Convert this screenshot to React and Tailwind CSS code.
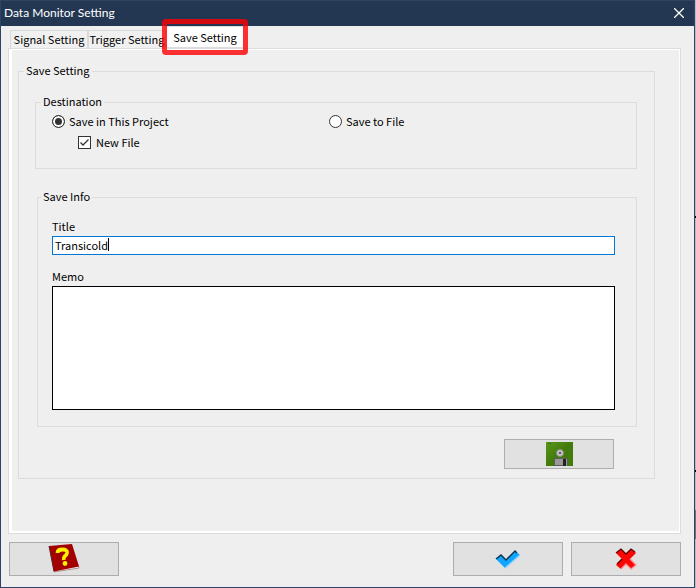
import { useState } from "react";

const tabs = ["Signal Setting", "Trigger Setting", "Save Setting"];

function GroupBox({ title, className, children }) {
  return (
    <fieldset className={`min-w-0 border border-[#dcdcdc] ${className}`}>
      <legend className="-ml-[11px] h-3 px-0.5 leading-[10px]">{title}</legend>
      {children}
    </fieldset>
  );
}

function RadioOption({ value, selected, onSelect, children }) {
  return (
    <label className="flex items-center gap-1 leading-4">
      <input
        type="radio"
        name="destination"
        value={value}
        checked={selected}
        onChange={() => onSelect(value)}
        className="size-[13px] appearance-none rounded-full border border-[#333] bg-white shadow-[inset_0_0_0_2px_white] checked:bg-[#333]"
      />
      {children}
    </label>
  );
}

function PushButton({ label, className, children }) {
  return (
    <button
      type="button"
      aria-label={label}
      className={`flex w-[110px] items-center justify-center border border-[#adadad] bg-[#e1e1e1] ${className}`}
    >
      {children}
    </button>
  );
}

function BookIcon() {
  return (
    <svg width="32" height="30" viewBox="0 0 32 30">
      <path d="M6 28 L31 24 L30 21" fill="#f4f4f4" stroke="#b09090" strokeWidth="1" />
      <path d="M1 2 L24 0 L31 22.500 L6 27.500Z" fill="#a30000" />
      <path d="M1 2 L6 27.500" stroke="#5c2020" strokeWidth="1" />
      <path d="M9.500 9 Q9.500 5.500 14.500 5.500 Q19.500 5.500 19 9 Q18.500 11.500 16.500 12.500 Q15.500 13.500 15.800 16" fill="none" stroke="#fff000" strokeWidth="3.800" />
      <circle cx="17" cy="19.500" r="2.400" fill="#fff000" />
    </svg>
  );
}

function CheckIcon() {
  return (
    <svg width="26" height="20" viewBox="0 0 26 20">
      <path d="M1 10 L6 6 L11 11 L20 2 L25 6 L10 19Z" fill="#10a5ff" />
      <path d="M1 10 L6 6 L11 11 L20 2 L22 4" fill="none" stroke="#0b3550" strokeWidth="1.500" />
      <path d="M25 6 L10 19" stroke="#8fd4ff" strokeWidth="1.500" />
    </svg>
  );
}

function CrossIcon() {
  return (
    <svg width="22" height="22" viewBox="0 0 22 22">
      <path d="M6 1 L11 6 L16 1 L21 5 L15 11 L21 17 L16 21 L11 16 L6 21 L1 17 L7 11 L1 5Z" fill="#fb0505" />
      <path d="M1 5 L6 1 L11 6 L16 1 L20 4 M7 11 L2 16" fill="none" stroke="#5a0000" strokeWidth="1.300" />
      <path d="M15 11 L21 17 L16 21 L11 16 L6 21" fill="none" stroke="#ff8f8f" strokeWidth="1.300" />
    </svg>
  );
}

function DiskIcon() {
  return (
    <svg width="27" height="24" viewBox="0 0 27 24">
      <defs>
        <linearGradient id="disk" x1="0" y1="0" x2="1" y2="1">
          <stop offset="0" stopColor="#59981a" />
          <stop offset="0.500" stopColor="#437a0c" />
          <stop offset="1" stopColor="#437a0c" />
        </linearGradient>
      </defs>
      <rect width="27" height="24" fill="url(#disk)" />
      <rect x="2" y="1" width="3" height="1" fill="#3f6b14" />
      <circle cx="14" cy="11" r="3.500" fill="#c4c4c4" stroke="#8a8a8a" strokeWidth="1" />
      <rect x="13" y="10" width="2" height="2" fill="#555" />
      <rect x="8" y="16" width="14" height="8" fill="#5d5d5d" />
      <rect x="9" y="17" width="8" height="6" fill="#999" />
      <rect x="17" y="17" width="3" height="7" fill="#222" />
      <rect x="20" y="17" width="1" height="7" fill="#999" />
    </svg>
  );
}

function App() {
  const [activeTab, setActiveTab] = useState("Save Setting");
  const [destination, setDestination] = useState("project");
  const [newFile, setNewFile] = useState(true);
  const [title, setTitle] = useState("Transicold");
  const [memo, setMemo] = useState("");

  return (
    <div className="flex min-h-screen bg-[#b6bcc6]">
      <div className="flex flex-1 flex-col border border-[#2f4464] bg-[#efefef] text-[11px] text-black font-['Noto_Sans_CJK_JP',sans-serif]">

        {/* TITLE BAR */}
        <div className="flex h-[25px] items-center justify-between bg-[#243752] pr-2 pb-0.5 pl-[3px] text-xs text-white font-['Lato',sans-serif]">
          <h1>Data Monitor Setting</h1>
          <button type="button" aria-label="Close" className="p-0.5">
            <svg width="10" height="10" viewBox="0 0 10 10" stroke="#fff" strokeWidth="1.300">
              <path d="M0 0 L10 10 M10 0 L0 10" />
            </svg>
          </button>
        </div>

        {/* TABS */}
        <div role="tablist" className="flex h-[22px] items-end pl-[9px] font-['Noto_Sans_CJK_JP',sans-serif]">
          {tabs.map((tab) => (
            <button
              key={tab}
              type="button"
              role="tab"
              aria-selected={tab === activeTab}
              onClick={() => setActiveTab(tab)}
              className={
                tab === activeTab
                  ? "relative h-[22px] w-[78px] border border-[#dcdcdc] bg-white whitespace-nowrap"
                  : "h-[18px] w-[78px] border border-b-0 border-[#d9d9d9] bg-[#f0f0f0] whitespace-nowrap"
              }
            >
              {tab}
              {tab === activeTab && (
                <span className="absolute -inset-x-[5px] -inset-y-2 rounded-sm border-5 border-[#ff0000]/80" />
              )}
            </button>
          ))}
        </div>

        {/* TAB PAGE */}
        <div className="mr-[13px] ml-[7px] flex flex-1 border border-[#dcdcdc]">
          <div className="min-w-0 flex-1 border-t border-r border-b-2 border-l-3 border-white pt-[15px] pr-6 pl-1.5">
            <GroupBox title="Save Setting" className="h-[414px] pr-[17px] pl-4">
              <GroupBox title="Destination" className="mt-[19px] h-[73px] pl-4">
                <div className="mt-[5px] grid grid-cols-[277px_1fr]">
                  <RadioOption value="project" selected={destination === "project"} onSelect={setDestination}>
                    Save in This Project
                  </RadioOption>
                  <RadioOption value="file" selected={destination === "file"} onSelect={setDestination}>
                    Save to File
                  </RadioOption>
                </div>
                <label className="mt-[5px] ml-[26px] flex items-center gap-[5px] leading-4">
                  <span className="relative size-[13px]">
                    <input
                      type="checkbox"
                      checked={newFile}
                      onChange={(e) => setNewFile(e.target.checked)}
                      className="block size-[13px] appearance-none border border-[#333] bg-white"
                    />
                    {newFile && (
                      <svg className="pointer-events-none absolute inset-0" width="13" height="13" viewBox="0 0 13 13">
                        <path d="M2.500 6.500 L5 9 L10.500 3.500" fill="none" stroke="#333" strokeWidth="1.300" />
                      </svg>
                    )}
                  </span>
                  New File
                </label>
              </GroupBox>

              <GroupBox title="Save Info" className="mt-[22px] ml-0.5 h-[236px] pr-[21px] pl-3.5">
                <label htmlFor="title" className="mt-[15px] mb-px block leading-[17px]">Title</label>
                <div className="flex h-[19px] items-center border border-[#0078d7] bg-white pb-0.5 pl-0.5">
                  <input
                    id="title"
                    value={title}
                    onChange={(e) => setTitle(e.target.value)}
                    className="field-sizing-content max-w-full leading-4 outline-none"
                  />
                  <span className="h-[13px] w-px bg-black" />
                </div>
                <label htmlFor="memo" className="mt-[13px] mb-px block leading-[17px]">Memo</label>
                <textarea
                  id="memo"
                  value={memo}
                  onChange={(e) => setMemo(e.target.value)}
                  className="block h-[124px] w-full resize-none border border-black bg-white p-0.5 outline-none"
                />
              </GroupBox>

              <div className="mt-3 flex justify-end pr-[23px]">
                <PushButton label="Save" className="h-[30px]"><DiskIcon /></PushButton>
              </div>
            </GroupBox>
          </div>
        </div>

        {/* FOOTER */}
        <div className="flex gap-2 pt-2 pr-[13px] pb-[11px] pl-2">
          <PushButton label="Help" className="mr-auto h-[34px]"><BookIcon /></PushButton>
          <PushButton label="OK" className="h-[34px]"><CheckIcon /></PushButton>
          <PushButton label="Cancel" className="h-[34px]"><CrossIcon /></PushButton>
        </div>

      </div>

      {/* EDGE OF THE WINDOW BEHIND */}
      <div className="w-px">
        <div className="mt-[216px] h-0.5 bg-black" />
        <div className="mt-[252px] h-0.5 bg-black" />
        <div className="mt-[38px] h-[29px] bg-[#6c7078]" />
      </div>
    </div>
  );
}

export default App;
